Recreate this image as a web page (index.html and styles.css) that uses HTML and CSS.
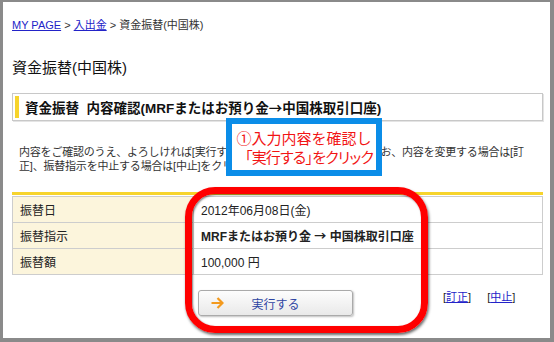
FILE: index.html
```html
<!DOCTYPE html>
<html lang="ja">
<head>
    <meta charset="UTF-8">
    <meta name="viewport" content="width=device-width, initial-scale=1.0">
    <title>資金振替(中国株)</title>
    <link rel="stylesheet" href="styles.css">
</head>
<body>
    <div class="frame">
        <!-- breadcrumb -->
        <div class="crumbs">
            <a href="#">MY PAGE</a> &gt; <a href="#">入出金</a> &gt; 資金振替(中国株)
        </div>

        <h1 class="page-title">資金振替(中国株)</h1>

        <div class="section-box">
            <h2 class="section-title">資金振替&nbsp;&nbsp;内容確認(MRFまたはお預り金<span class="arw">→</span>中国株取引口座)</h2>
        </div>

        <p class="lead">内容をご確認のうえ、よろしければ[実行する]をクリックしてください。なお、内容を変更する場合は[訂正]、振替指示を中止する場合は[中止]をクリックしてください。</p>

        <div class="detail-wrap">
            <table class="detail">
                <tr>
                    <th>振替日</th>
                    <td>2012年06月08日(金)</td>
                </tr>
                <tr>
                    <th>振替指示</th>
                    <td class="strong">MRFまたはお預り金 <span class="arw">→</span> 中国株取引口座</td>
                </tr>
                <tr>
                    <th>振替額</th>
                    <td>100,000 円</td>
                </tr>
            </table>
        </div>

        <div class="actions">
            <button class="btn-exec" type="button">
                <svg class="btn-arrow" width="13" height="12" viewBox="0 0 13 12">
                    <path d="M0.5 6 H11.5 M6.5 1 L11.5 6 L6.5 11" fill="none" stroke="#f39a1e" stroke-width="2.2"/>
                </svg>
                <span class="btn-label">実行する</span>
            </button>
            <div class="links">
                <span>[<a href="#">訂正</a>]</span>
                <span>[<a href="#">中止</a>]</span>
            </div>
        </div>

        <!-- annotations drawn over the page -->
        <div class="note">
            <span class="note-line">①入力内容を確認し</span>
            <span class="note-line tight">「実行する」をクリック</span>
        </div>
        <div class="ring"></div>
    </div>
</body>
</html>
```

FILE: styles.css
```css
body {
    margin: 0;
    font-family: "Liberation Sans", "Noto Sans CJK JP", sans-serif;
    color: #222;
}

.frame {
    position: relative;
    width: 554px;
    height: 342px;
    box-sizing: border-box;
    border-style: solid;
    border-color: #8a8a8a;
    border-width: 2px 4px 4px 3px;
    padding: 16px 7px 0 9px;
    background: #fff;
    overflow: hidden;
}

.crumbs {
    font-size: 11px;
    line-height: 14px;
    color: #333;
}

.crumbs a {
    color: #2323c8;
}

.page-title {
    margin: 27px 0 0;
    font-size: 15px;
    line-height: 18px;
    font-weight: normal;
    color: #111;
}

.section-box {
    margin-top: 16px;
    border: 1px solid #c8c8c8;
    padding: 2px;
    box-shadow: 1px 1px 0 #e4e4e4;
}

.section-title {
    margin: 0;
    height: 22px;
    line-height: 22px;
    padding-left: 6px;
    border-left: 4px solid #f7d42c;
    font-size: 13.5px;
    font-weight: bold;
    color: #111;
}

.arw {
    font-family: "Noto Sans CJK JP", sans-serif;
}

.lead {
    margin: 24px 0 0;
    padding: 0 6px 0 7px;
    font-size: 11px;
    line-height: 14px;
    letter-spacing: -0.2px;
    color: #333;
}

.detail-wrap {
    margin-top: 19px;
    border-top: 3px solid #f7d42c;
    padding-top: 1px;
}

.detail {
    width: 100%;
    border-collapse: collapse;
    font-size: 12px;
}

.detail th,
.detail td {
    height: 25px;
    padding: 0 7px;
    border: 1px solid #cdcdcd;
    text-align: left;
    font-weight: normal;
}

.detail th {
    width: 166px;
    background: #fcf5dc;
}

.detail td.strong {
    font-weight: bold;
}

.actions {
    display: flex;
    align-items: flex-start;
    margin-top: 15px;
    padding-left: 186px;
}

.btn-exec {
    display: flex;
    align-items: center;
    width: 155px;
    height: 26px;
    padding: 0 12px;
    border: 1px solid #aaa;
    border-radius: 3px;
    background: linear-gradient(#fdfdfd, #e9e9e9);
    box-shadow: 1px 1px 2px rgba(0, 0, 0, 0.25);
    font-family: inherit;
    cursor: pointer;
}

.btn-arrow {
    flex: none;
}

.btn-label {
    flex: 1;
    margin-right: 13px;
    text-align: center;
    font-size: 12px;
    color: #2e45a3;
}

.links {
    display: flex;
    gap: 16px;
    margin-left: 90px;
    font-size: 11px;
    line-height: 14px;
    color: #222;
}

.links a {
    color: #2323c8;
}

/* blue callout */
.note {
    position: absolute;
    left: 223px;
    top: 116px;
    width: 156px;
    height: 58px;
    box-sizing: border-box;
    border: 6px solid #0b8de8;
    background: #fff;
    display: flex;
    flex-direction: column;
    align-items: center;
    justify-content: center;
    font-family: "Noto Sans CJK JP", sans-serif;
    font-size: 15px;
    line-height: 19px;
    color: #f21414;
}

.note-line {
    display: block;
    height: 19px;
    white-space: nowrap;
}

.note-line.tight {
    font-feature-settings: "palt";
    letter-spacing: -0.8px;
    padding-left: 10px;
}

/* red ring around the details */
.ring {
    position: absolute;
    left: 182px;
    top: 185px;
    width: 243px;
    height: 146px;
    box-sizing: border-box;
    border: 7px solid #ff0000;
    border-radius: 30px;
    box-shadow: 1px 2px 3px rgba(0, 0, 0, 0.6), inset 1px 1px 2px rgba(0, 0, 0, 0.5);
}
```
